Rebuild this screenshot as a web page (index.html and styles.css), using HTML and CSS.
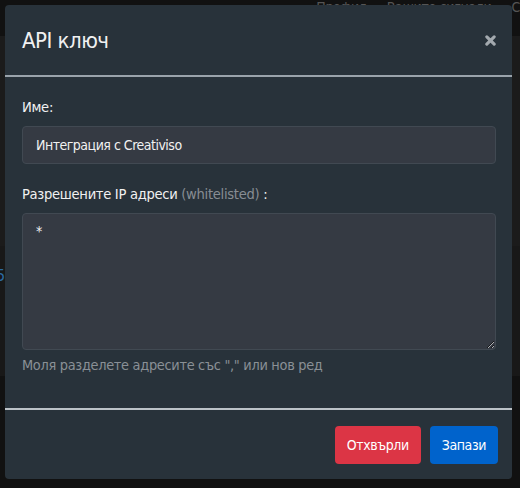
FILE: index.html
```html
<!DOCTYPE html>
<html lang="bg">

<head>
    <meta charset="UTF-8">
    <meta name="viewport" content="width=device-width, initial-scale=1.0">
    <title>API ключ</title>
    <link rel="stylesheet" href="styles.css">
</head>

<body>

    <!-- Page behind the modal -->
    <div class="page">
        <div class="topbar">
            <span>Профил</span>
            <span>Вашите сигнали</span>
            <span>С</span>
        </div>
        <div class="band"></div>
        <div class="band dark"><span class="link">5</span></div>
    </div>

    <div class="backdrop">
        <div class="modal">
            <div class="modal-header">
                <h2>API ключ</h2>
                <button class="close" type="button" aria-label="Затвори">
                    <svg width="11" height="11" viewBox="0 0 12 12">
                        <path d="M2 2 L10 10 M10 2 L2 10" stroke="#a3a9ae" stroke-width="3.4" stroke-linecap="round" />
                    </svg>
                </button>
            </div>

            <form class="modal-body" id="apiKeyForm">
                <div class="form-group">
                    <label for="keyName">Име:</label>
                    <input type="text" id="keyName" value="Интеграция с Creativiso">
                </div>
                <div class="form-group">
                    <label for="ips">Разрешените IP адреси <span class="muted">(whitelisted)</span> :</label>
                    <textarea id="ips">*</textarea>
                    <small class="hint">Моля разделете адресите със "," или нов ред</small>
                </div>
            </form>

            <div class="modal-footer">
                <button class="btn cancel" type="button">Отхвърли</button>
                <button class="btn save" type="submit" form="apiKeyForm">Запази</button>
            </div>
        </div>
    </div>

</body>

</html>
```

FILE: styles.css
```css
body {
    font-family: "DejaVu Sans Condensed", "DejaVu Sans", sans-serif;
    margin: 0;
    padding: 0;
    background-color: #111;
    color: #f1f1f1;
    height: 488px;
    overflow: hidden;
    letter-spacing: -0.3px;
}

.page {
    height: 100%;
}

.topbar {
    height: 36px;
    display: flex;
    justify-content: flex-end;
    gap: 20px;
    color: #555;
    font-size: 14px;
    line-height: 14px;
}

.band {
    height: 210px;
    background-color: #1b1b1b;
}

.band.dark {
    height: 110px;
    background-color: #181818;
    padding-top: 20px;
}

.link {
    color: #2c6aa0;
    font-size: 16px;
    margin-left: -4px;
}

.backdrop {
    position: absolute;
    top: 0;
    left: 0;
    right: 0;
    bottom: 0;
    padding: 5px 8px 0 5px;
}

.modal {
    background-color: #28323a;
    border-radius: 4px;
    height: 474px;
    display: flex;
    flex-direction: column;
}

.modal-header {
    display: flex;
    align-items: center;
    justify-content: space-between;
    height: 70px;
    padding: 0 16px 0 17px;
    border-bottom: 2px solid #9aa3ab;
}

.modal-header h2 {
    margin: 0;
    font-size: 22px;
    font-weight: normal;
    letter-spacing: -0.5px;
}

.close {
    background: none;
    border: none;
    padding: 0;
    display: flex;
    cursor: pointer;
}

.modal-body {
    padding: 21px 16px 0 17px;
    height: 310px;
}

.form-group {
    margin-bottom: 21px;
}

label {
    display: block;
    font-size: 14.6px;
    line-height: 17px;
    margin-bottom: 11px;
}

.muted {
    color: #878d93;
}

input[type="text"],
textarea {
    display: block;
    width: 100%;
    box-sizing: border-box;
    background-color: #353a43;
    border: 1px solid #414952;
    border-radius: 4px;
    color: #f1f1f1;
    font-family: inherit;
    font-size: 14px;
    letter-spacing: -0.5px;
    padding: 0 13px;
}

input[type="text"] {
    height: 38px;
}

textarea {
    height: 137px;
    padding-top: 9px;
    resize: vertical;
}

.hint {
    display: block;
    color: #8a9096;
    font-size: 14.4px;
    margin-top: 7px;
}

.modal-footer {
    display: flex;
    justify-content: flex-end;
    gap: 9px;
    padding: 16px 14px 0 0;
    border-top: 2px solid #bcc2c7;
}

.btn {
    height: 38px;
    padding: 0 12px;
    border: none;
    border-radius: 4px;
    color: white;
    font-family: inherit;
    font-size: 14px;
    letter-spacing: -0.4px;
    cursor: pointer;
}

.btn.cancel {
    background-color: #dc3545;
}

.btn.save {
    background-color: #0063cc;
}
```
